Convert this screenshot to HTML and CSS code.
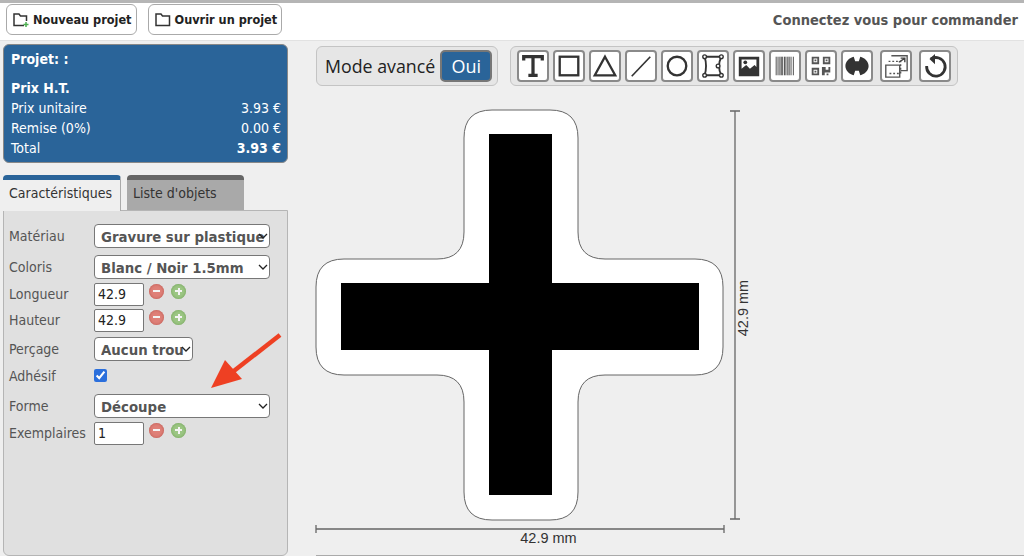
FILE: index.html
```html
<!DOCTYPE html>
<html lang="fr">

<head>
    <meta charset="utf-8">
    <meta name="viewport" content="width=device-width, initial-scale=1.0">
    <title>Projet</title>
    <link rel="stylesheet" href="styles.css">
</head>

<body>
    <header class="topbar">
        <button class="topbtn">
            <svg width="18" height="16" viewBox="0 0 18 16" fill="none" stroke="#333" stroke-width="1.5"><path d="M12 13.500H2V2h5l1.500 2H14.500V9"/><path d="M14 10v5M11.500 12.500h5" stroke="#4caf50"/></svg>
            Nouveau projet
        </button>
        <button class="topbtn">
            <svg width="18" height="16" viewBox="0 0 18 16" fill="none" stroke="#333" stroke-width="1.5"><path d="M2 13.500V2h5l1.500 2H15.500V13.500Z"/></svg>
            Ouvrir un projet
        </button>
        <span class="connect">Connectez vous pour commander</span>
    </header>

    <div class="page">
        <aside class="side">
            <section class="prix">
                <h2 class="prix-titre">Projet: :</h2>
                <h3 class="prix-sous">Prix H.T.</h3>
                <p class="prix-ligne"><span>Prix unitaire</span><span>3.93 €</span></p>
                <p class="prix-ligne"><span>Remise (0%)</span><span>0.00 €</span></p>
                <p class="prix-ligne"><span>Total</span><b>3.93 €</b></p>
            </section>

            <nav class="tabs">
                <a class="tab actif">Caractéristiques</a>
                <a class="tab">Liste d'objets</a>
            </nav>

            <form class="panel">
                <div class="ligne l-materiau">
                    <label>Matériau</label>
                    <div class="sel large">
                        <select><option>Gravure sur plastique</option></select>
                        <svg class="chevron" width="10" height="6" viewBox="0 0 10 6"><path d="M1 1l4 4 4-4" fill="none" stroke="#222" stroke-width="1.300"/></svg>
                    </div>
                </div>
                <div class="ligne l-coloris">
                    <label>Coloris</label>
                    <div class="sel large">
                        <select><option>Blanc / Noir 1.5mm</option></select>
                        <svg class="chevron" width="10" height="6" viewBox="0 0 10 6"><path d="M1 1l4 4 4-4" fill="none" stroke="#222" stroke-width="1.300"/></svg>
                    </div>
                </div>
                <div class="ligne l-nombre">
                    <label>Longueur</label>
                    <input class="nombre" value="42.9">
                    <span class="rond moins"></span><span class="rond plus"></span>
                </div>
                <div class="ligne l-nombre">
                    <label>Hauteur</label>
                    <input class="nombre" value="42.9">
                    <span class="rond moins"></span><span class="rond plus"></span>
                </div>
                <div class="ligne l-percage">
                    <label>Perçage</label>
                    <div class="sel petit">
                        <select><option>Aucun trou</option></select>
                        <svg class="chevron" width="10" height="6" viewBox="0 0 10 6"><path d="M1 1l4 4 4-4" fill="none" stroke="#222" stroke-width="1.300"/></svg>
                    </div>
                </div>
                <div class="ligne l-adhesif">
                    <label>Adhésif</label>
                    <input class="coche" type="checkbox" checked>
                </div>
                <div class="ligne l-forme">
                    <label>Forme</label>
                    <div class="sel large">
                        <select><option>Découpe</option></select>
                        <svg class="chevron" width="10" height="6" viewBox="0 0 10 6"><path d="M1 1l4 4 4-4" fill="none" stroke="#222" stroke-width="1.300"/></svg>
                    </div>
                </div>
                <div class="ligne l-nombre">
                    <label>Exemplaires</label>
                    <input class="nombre" value="1">
                    <span class="rond moins"></span><span class="rond plus"></span>
                </div>
                <svg class="fleche" width="76" height="60" viewBox="0 0 76 60"><path d="M72 3L22 42" stroke="#ee4023" stroke-width="4.500" fill="none"/><path d="M3 56L17 28 34 47Z" fill="#ee4023"/></svg>
            </form>
        </aside>

        <main class="zone">
            <div class="barre">
                <div class="mode">
                    <span>Mode avancé</span>
                    <button class="oui">Oui</button>
                </div>
                <div class="outils">
                    <button class="outil"><svg viewBox="0 0 28 28"><path d="M4 8V4H24V8M14 4V24M9 24H19" fill="none" stroke="#333" stroke-width="3.500"/></svg></button>
                    <button class="outil"><svg viewBox="0 0 28 28"><rect x="4" y="4" width="20" height="20" fill="none" stroke="#333" stroke-width="2.500"/></svg></button>
                    <button class="outil"><svg viewBox="0 0 28 28"><path d="M14 4L25 24H3Z" fill="none" stroke="#333" stroke-width="2.500"/></svg></button>
                    <button class="outil"><svg viewBox="0 0 28 28"><path d="M4 25L24 4" fill="none" stroke="#333" stroke-width="1.800"/></svg></button>
                    <button class="outil"><svg viewBox="0 0 28 28"><circle cx="14" cy="14" r="10" fill="none" stroke="#333" stroke-width="2.500"/></svg></button>
                    <button class="outil"><svg viewBox="0 0 28 28"><path d="M5 4H23Q18 14 23 24H5Q8 14 5 4Z" fill="none" stroke="#333" stroke-width="2"/><g fill="#fff" stroke="#333" stroke-width="1.500"><circle cx="5" cy="4" r="2"/><circle cx="23" cy="4" r="2"/><circle cx="5" cy="24" r="2"/><circle cx="23" cy="24" r="2"/><circle cx="19.500" cy="14" r="2"/></g></svg></button>
                    <button class="outil"><svg viewBox="0 0 28 28"><path fill-rule="evenodd" d="M3 4H25V25H3ZM6 7V17L11 13 15 17 20 13 22 15V7Z" fill="#333"/><circle cx="10" cy="10" r="2" fill="#333"/></svg></button>
                    <button class="outil"><svg viewBox="0 0 28 28"><path d="M4.500 4V24M6.500 4V24M8.500 4V24M10 4V24M11.500 4V24M13.500 4V24M15 4V24M17 4V24M18.500 4V24M20.500 4V24M23 4V24" stroke="#444" stroke-width="1"/></svg></button>
                    <button class="outil"><svg viewBox="0 0 28 28" fill="#555"><path fill-rule="evenodd" d="M4 4H12V12H4ZM6 6V10H10V6ZM16 4H24V12H16ZM18 6V10H22V6ZM4 16H12V24H4ZM6 18V22H10V18Z"/><path d="M7 7h2v2H7zM19 7h2v2h-2zM7 19h2v2H7zM15 15h4v3h3v-3h2v6h-6v3h-3zM20 22h2v2h-2z"/></svg></button>
                    <button class="outil"><svg viewBox="0 0 28 28"><path d="M10.500 4L12 9H16L17.500 4C22 5 26.500 9 26.500 14S22 23 17.500 24L16 19H12L10.500 24C6 23 1.500 19 1.500 14S6 5 10.500 4Z" fill="#333"/></svg></button>
                    <button class="outil espace"><svg viewBox="0 0 28 28" fill="none" stroke="#555" stroke-width="1.500"><path d="M9 3H26V19H19M3 13H18V26H3Z"/><path d="M6 9H19V22H6" stroke-dasharray="2 2"/><path d="M17 10L23 6M19 5.500H23.500V10" stroke="#444"/></svg></button>
                    <button class="outil espace"><svg viewBox="0 0 28 28" fill="none" stroke="#333" stroke-width="3"><path d="M9.500 6.500A10 10 0 1 1 5 14"/><path d="M14 1L8 6.500 14 12" stroke-width="0" fill="#333"/></svg></button>
                </div>
            </div>

            <svg class="dessin" width="724" height="470" viewBox="300 86 724 470">
                <path d="M492 110H550Q578 110 578 138V232Q578 259 605 259H695Q723 259 723 287V347Q723 375 695 375H605Q578 375 578 402V492Q578 520 550 520H492Q464 520 464 492V402Q464 375 437 375H344Q316 375 316 347V287Q316 259 344 259H437Q464 259 464 232V138Q464 110 492 110Z" fill="#fff" stroke="#666" stroke-width="1"/>
                <path d="M489 134H552V283H699V350H552V495H489V350H341V283H489Z" fill="#000"/>
                <g stroke="#666" stroke-width="1.300">
                    <path d="M735 111V519M730 111H740M730 519H740"/>
                    <path d="M316 529H724M316 525V533M724 525V533"/>
                </g>
                <text class="cote" x="548.500" y="543" text-anchor="middle">42.9 mm</text>
                <text class="cote" x="748" y="308" text-anchor="middle" transform="rotate(-90 748 308)">42.9 mm</text>
                <path d="M316 555.500H1024" stroke="#aaa" stroke-width="1"/>
            </svg>
        </main>
    </div>
</body>

</html>
```

FILE: styles.css
```css
* {
    box-sizing: border-box;
}

html,
body {
    margin: 0;
    height: 556px;
    overflow: hidden;
}

body {
    font-family: "DejaVu Sans Condensed", "DejaVu Sans", sans-serif;
    font-size: 14px;
    color: #333;
    background-color: #efefef;
}

.topbar {
    display: flex;
    align-items: center;
    gap: 11px;
    height: 41px;
    padding: 0 6px 4px;
    background-color: #fff;
    border-top: 3px solid #b5b5b5;
    border-bottom: 1px solid #e2e2e2;
}

.topbtn {
    display: flex;
    align-items: center;
    gap: 3px;
    height: 31px;
    padding: 0 4px 0 5px;
    font-family: inherit;
    font-size: 12.600px;
    font-weight: bold;
    color: #222;
    background-color: #fff;
    border: 1px solid #aaa;
    border-radius: 6px;
}

.connect {
    margin-left: auto;
    font-size: 14.500px;
    font-weight: bold;
    color: #555;
}

.page {
    display: flex;
}

.side {
    flex: none;
    width: 316px;
    padding: 3px 0 0 3px;
}

.prix {
    width: 285px;
    height: 119px;
    padding: 4px 6px 0 7px;
    color: #fff;
    background-color: #2a6499;
    border: 1px solid #888;
    border-radius: 6px;
}

.prix-titre,
.prix-sous {
    margin: 0;
    font-size: 14px;
    line-height: 20px;
}

.prix-sous {
    margin-top: 9px;
}

.prix-ligne {
    display: flex;
    justify-content: space-between;
    margin: 0;
    line-height: 20px;
}

.tabs {
    display: flex;
    gap: 6px;
    height: 35px;
    margin-top: 12px;
}

.tab {
    width: 118px;
    height: 35px;
    padding: 5px 6px 0;
    color: #333;
    background-color: #a9a9a9;
    border-top: 5px solid #666;
    border-radius: 4px 4px 0 0;
}

.tab.actif {
    position: relative;
    z-index: 1;
    height: 36px;
    background-color: #efefef;
    border-top-color: #2a6499;
    border-right: 1px solid #aaa;
}

.tab + .tab {
    width: 117px;
}

.panel {
    position: relative;
    width: 285px;
    height: 346px;
    padding-top: 13px;
    background-color: #e0e0e0;
    border: 1px solid #b5b5b5;
    border-radius: 0 0 6px 6px;
}

.ligne {
    display: flex;
    align-items: center;
}

.ligne label {
    flex: none;
    width: 90px;
    padding-left: 5px;
    color: #555;
}

.l-coloris {
    margin-top: 7px;
}

.l-nombre {
    height: 22px;
    margin-top: 4px;
}

.l-percage {
    margin-top: 6px;
}

.l-adhesif {
    height: 13px;
    margin-top: 8px;
}

.l-forme {
    margin-top: 12px;
}

.sel {
    position: relative;
}

.sel select {
    display: block;
    width: 100%;
    height: 24px;
    padding: 0 4px 0 6px;
    font-family: inherit;
    font-size: 14.800px;
    font-weight: bold;
    color: #555;
    background-color: #fff;
    border: 1px solid #777;
    border-radius: 4px;
    appearance: none;
}

.large {
    width: 176px;
}

.petit {
    width: 99px;
}

.chevron {
    position: absolute;
    top: 9px;
    right: 2px;
}

.nombre {
    width: 50px;
    height: 23px;
    padding: 0 3px;
    font-family: inherit;
    font-size: 14px;
    color: #222;
    background-color: #fff;
    border: 1px solid #777;
    border-radius: 2px;
}

.rond {
    position: relative;
    width: 15px;
    height: 15px;
    margin-top: -6px;
    border-radius: 50%;
}

.moins {
    margin-left: 5px;
    background-color: #df8078;
    box-shadow: inset 0 0 3px #b8554d;
}

.plus {
    margin-left: 7px;
    background-color: #9cc684;
    box-shadow: inset 0 0 3px #6f9f55;
}

.moins::before,
.plus::before,
.plus::after {
    content: "";
    position: absolute;
    top: 6.500px;
    left: 4px;
    width: 7px;
    height: 2px;
    background-color: #f4f4f4;
}

.plus::after {
    top: 4px;
    left: 6.500px;
    width: 2px;
    height: 7px;
}

.coche {
    width: 13px;
    height: 13px;
    margin: 0;
    accent-color: #2b6fdc;
}

.fleche {
    position: absolute;
    top: 121px;
    left: 204px;
}

.zone {
    flex: 1;
}

.barre {
    display: flex;
    gap: 12px;
    padding-top: 5px;
}

.mode {
    display: flex;
    align-items: center;
    gap: 5px;
    width: 182px;
    height: 40px;
    padding-left: 8px;
    font-family: "Open Sans", sans-serif;
    font-size: 17.800px;
    color: #222;
    background-color: #e6e6e6;
    border: 1px solid #c4c4c4;
    border-radius: 6px;
}

.mode span {
    white-space: nowrap;
}

.oui {
    width: 52px;
    height: 32px;
    padding: 0;
    font-family: inherit;
    font-size: 18px;
    color: #fff;
    background-color: #2a6499;
    border: 2px solid #777;
    border-radius: 5px;
}

.outils {
    display: flex;
    align-items: center;
    gap: 4px;
    width: 448px;
    height: 40px;
    padding-left: 6px;
    background-color: #e6e6e6;
    border: 1px solid #c4c4c4;
    border-radius: 6px;
}

.outil {
    flex: none;
    width: 32px;
    height: 32px;
    padding: 1px;
    background-color: #fff;
    border: 2px solid #8a8a8a;
    border-radius: 4px;
}

.outil svg {
    display: block;
    width: 26px;
    height: 26px;
}

.outil.espace {
    margin-left: 3px;
}

.dessin {
    display: block;
    margin-left: -16px;
}

.cote {
    font-family: "Liberation Sans", sans-serif;
    font-size: 14.500px;
    fill: #333;
}
```
